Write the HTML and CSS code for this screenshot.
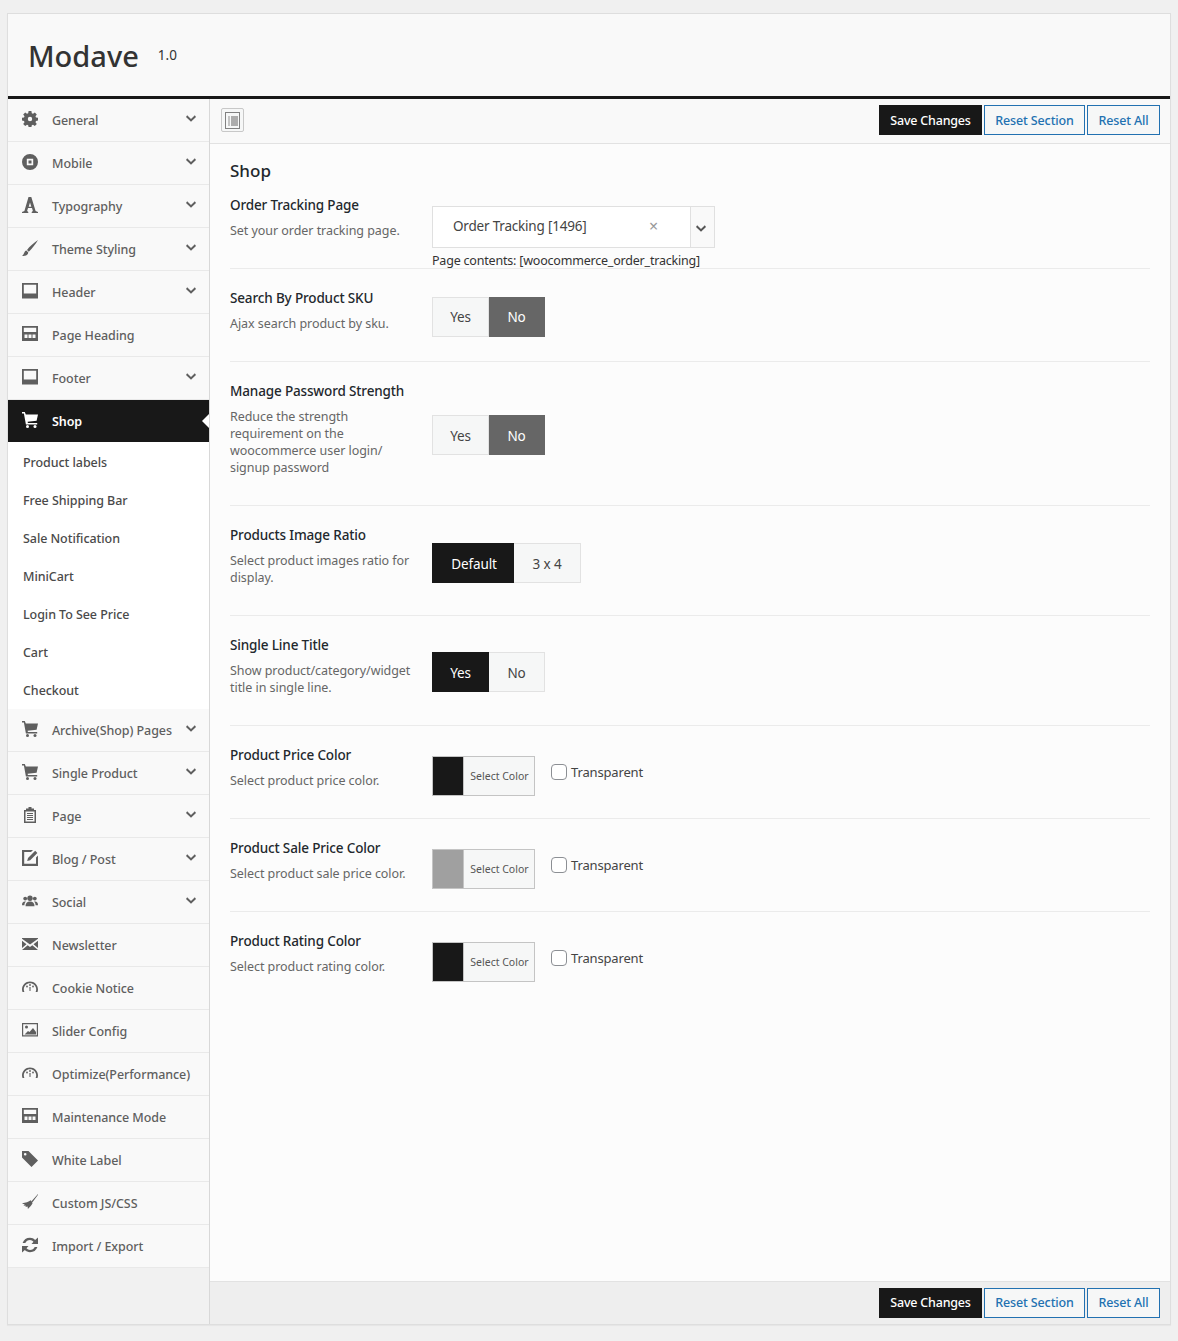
FILE: index.html
```html
<!DOCTYPE html>
<html lang="en">
<head>
<meta charset="utf-8">
<title>Modave Options</title>
<link rel="stylesheet" href="styles.css">
</head>
<body>
<svg class="defs" width="0" height="0" aria-hidden="true">
  <defs>
    <symbol id="i-gear" viewBox="0 0 16 16">
      <path fill-rule="evenodd" d="M6.600 0h2.800l.4 2.200 1.200.5L12.800 1.400l2 2-1.300 1.800.5 1.200 2 .4v2.800l-2 .4-.5 1.200 1.300 1.800-2 2-1.800-1.300-1.200.5-.4 2H6.600l-.4-2-1.200-.5-1.800 1.300-2-2 1.300-1.800-.5-1.200-2-.4V6.800l2-.4.5-1.200L1.200 3.400l2-2L5 2.700l1.200-.5zM8 5.800a2.200 2.200 0 1 0 0 4.400 2.200 2.200 0 0 0 0-4.400z"/>
    </symbol>
    <symbol id="i-mobile" viewBox="0 0 16 16">
      <path fill-rule="evenodd" d="M8 0a8 8 0 1 1 0 16A8 8 0 0 1 8 0zM4.800 4.800v6.400h6.400V4.800zM6.500 6.500h3v3h-3z"/>
    </symbol>
    <symbol id="i-type" viewBox="0 0 16 16">
      <path fill-rule="evenodd" d="M6.500 0h2.800l4.300 14 2.400 1v1h-6.300v-1l1.200-1-.9-3H6l-.9 3 1.200 1v1H0v-1l2.400-1zM8 5.500 6.700 9.800h2.600z"/>
    </symbol>
    <symbol id="i-brush" viewBox="0 0 16 16">
      <path d="M16 0C12 2.500 7.500 6.500 5 10l1.800 1.800C10 9 13.500 4 16 0zM4.400 10.600C2 11.200 2.600 14.200 0 16c3 .2 6.200-.8 6.300-3.500z"/>
    </symbol>
    <symbol id="i-frame" viewBox="0 0 16 16">
      <path fill-rule="evenodd" d="M0 0h16v15.500H0zM1.800 1.800v8.700h12.400V1.800z"/>
    </symbol>
    <symbol id="i-layout" viewBox="0 0 16 16">
      <path fill-rule="evenodd" d="M0 0h16v15H0zM1.800 1.800V6h12.400V1.800zM2.500 8.500v3.500h3V8.500zM6.500 8.500v3.500h3V8.500zM10.500 8.500v3.500h3V8.500z"/>
    </symbol>
    <symbol id="i-cart" viewBox="0 0 16 16">
      <path d="M0 0h2.800l1 2.500H16l-1.400 6.300-9 1 .3 1.200h9.300v1.500H3.900L1.900 1.500H0z"/>
      <circle cx="5.500" cy="14.500" r="1.500"/><circle cx="13" cy="14.500" r="1.500"/>
    </symbol>
    <symbol id="i-clip" viewBox="0 0 16 16">
      <path fill-rule="evenodd" d="M6.500 0h3v1.500H12V3h2v13H2V3h2V1.500h2.500zM3.500 4.500v10h9v-10zM5 6h6v1H5zM5 8h6v1H5zM5 10h6v1H5zM5 12h6v1H5z"/>
    </symbol>
    <symbol id="i-edit" viewBox="0 0 16 16">
      <path d="M0 0h11L9 2H2.200v11.800H14V7.500l2-2V16H0z"/>
      <path d="M13.200.8 15.400 3 8.200 10.200l-3 .8.800-3z"/>
    </symbol>
    <symbol id="i-group" viewBox="0 0 16 16">
      <circle cx="8" cy="5.200" r="2.700"/><circle cx="3.200" cy="5.600" r="1.900"/><circle cx="12.800" cy="5.600" r="1.900"/>
      <path d="M3.500 13.200c0-3 1.500-4.700 4.500-4.700s4.500 1.700 4.500 4.700zM0 12.200c0-2.400.9-3.700 3-3.700.4 0 .8 0 1 .1-1 1-1.500 2.100-1.600 3.600zM16 12.200c0-2.400-.9-3.700-3-3.700-.4 0-.8 0-1 .1 1 1 1.500 2.100 1.600 3.600z"/>
    </symbol>
    <symbol id="i-mail" viewBox="0 0 16 16">
      <path d="M0 2h16v.8L8 8.600 0 2.800zM0 4.800l4.500 3.400L0 12zM16 4.800v7.200l-4.500-3.800zM5.700 9.200 8 10.900l2.300-1.700L16 14H0z"/>
    </symbol>
    <symbol id="i-gauge" viewBox="0 0 16 16">
      <path fill-rule="evenodd" d="M8 2.500c4.400 0 8 3.400 8 7.800 0 1-.2 1.900-.5 2.700h-1.900c.4-.8.600-1.700.6-2.700C14.200 7 11.400 4.300 8 4.300S1.800 7 1.800 10.300c0 1 .2 1.900.6 2.700H.5A8 8 0 0 1 0 10.300c0-4.400 3.600-7.800 8-7.800z"/>
      <circle cx="8" cy="6" r=".9"/><circle cx="5" cy="7.500" r=".9"/><circle cx="11" cy="7.500" r=".9"/><path d="M7.400 8h1.200L8.500 12h-1z"/>
    </symbol>
    <symbol id="i-pic" viewBox="0 0 16 16">
      <path fill-rule="evenodd" d="M0 1h16v13.500H0zM1.200 2.200v11h13.600v-11z"/>
      <circle cx="4.500" cy="5" r="1.500"/><path d="M2.500 12.500 6 9l1.500 1L11 6l3 4v2.500z"/>
    </symbol>
    <symbol id="i-tag" viewBox="0 0 16 16">
      <path fill-rule="evenodd" d="M0 0h6.500L16 9.500 9.500 16 0 6.500zM3.200 2a1.300 1.300 0 1 0 0 2.600 1.300 1.300 0 0 0 0-2.600z"/>
    </symbol>
    <symbol id="i-broom" viewBox="0 0 16 16">
      <path d="M16 0 9.500 7.200l1 1L16 .7zM8.800 6.200c-2.200 1.700-5 2.400-8.800 3 1 .5 1.800.8 2.800 1.100L1.500 11.500l2.500.3-.6 1.300 2.200-.6.300 2.500c2.400-2.400 4.200-4.300 4.700-6z"/>
    </symbol>
    <symbol id="i-sync" viewBox="0 0 16 16">
      <path d="M8 .8c2 0 3.800.8 5.100 2.100L16 .5V7H9.500l2-2.300A5 5 0 0 0 8 3a5.200 5.200 0 0 0-4.700 3H.6A7.900 7.900 0 0 1 8 .8zM0 9h6.500l-2 2.300A5 5 0 0 0 8 13c2.100 0 3.900-1.200 4.700-3h2.700A7.900 7.900 0 0 1 8 15.200c-2 0-3.800-.8-5.100-2.100L0 15.500z"/>
    </symbol>
    <symbol id="i-chev" viewBox="0 0 12 8">
      <path d="M1.400 0 6 4.500 10.600 0 12 2.200 6 8 0 2.200z"/>
    </symbol>
  </defs>
</svg>

<div class="shell">
  <header class="brand">
    <h1 class="brand-name">Modave</h1>
    <span class="brand-ver">1.0</span>
  </header>

  <div class="body">
    <nav class="side">
      <a class="item"><svg class="ico"><use href="#i-gear"/></svg><span class="lbl">General</span><svg class="chev"><use href="#i-chev"/></svg></a>
      <a class="item"><svg class="ico"><use href="#i-mobile"/></svg><span class="lbl">Mobile</span><svg class="chev"><use href="#i-chev"/></svg></a>
      <a class="item"><svg class="ico"><use href="#i-type"/></svg><span class="lbl">Typography</span><svg class="chev"><use href="#i-chev"/></svg></a>
      <a class="item"><svg class="ico"><use href="#i-brush"/></svg><span class="lbl">Theme Styling</span><svg class="chev"><use href="#i-chev"/></svg></a>
      <a class="item"><svg class="ico"><use href="#i-frame"/></svg><span class="lbl">Header</span><svg class="chev"><use href="#i-chev"/></svg></a>
      <a class="item"><svg class="ico"><use href="#i-layout"/></svg><span class="lbl">Page Heading</span></a>
      <a class="item"><svg class="ico"><use href="#i-frame"/></svg><span class="lbl">Footer</span><svg class="chev"><use href="#i-chev"/></svg></a>
      <a class="item item-on"><svg class="ico"><use href="#i-cart"/></svg><span class="lbl">Shop</span></a>
      <div class="sub">
        <a class="sub-item">Product labels</a>
        <a class="sub-item">Free Shipping Bar</a>
        <a class="sub-item">Sale Notification</a>
        <a class="sub-item">MiniCart</a>
        <a class="sub-item">Login To See Price</a>
        <a class="sub-item">Cart</a>
        <a class="sub-item">Checkout</a>
      </div>
      <a class="item"><svg class="ico"><use href="#i-cart"/></svg><span class="lbl">Archive(Shop) Pages</span><svg class="chev"><use href="#i-chev"/></svg></a>
      <a class="item"><svg class="ico"><use href="#i-cart"/></svg><span class="lbl">Single Product</span><svg class="chev"><use href="#i-chev"/></svg></a>
      <a class="item"><svg class="ico"><use href="#i-clip"/></svg><span class="lbl">Page</span><svg class="chev"><use href="#i-chev"/></svg></a>
      <a class="item"><svg class="ico"><use href="#i-edit"/></svg><span class="lbl">Blog / Post</span><svg class="chev"><use href="#i-chev"/></svg></a>
      <a class="item"><svg class="ico"><use href="#i-group"/></svg><span class="lbl">Social</span><svg class="chev"><use href="#i-chev"/></svg></a>
      <a class="item"><svg class="ico"><use href="#i-mail"/></svg><span class="lbl">Newsletter</span></a>
      <a class="item"><svg class="ico"><use href="#i-gauge"/></svg><span class="lbl">Cookie Notice</span></a>
      <a class="item"><svg class="ico"><use href="#i-pic"/></svg><span class="lbl">Slider Config</span></a>
      <a class="item"><svg class="ico"><use href="#i-gauge"/></svg><span class="lbl">Optimize(Performance)</span></a>
      <a class="item"><svg class="ico"><use href="#i-layout"/></svg><span class="lbl">Maintenance Mode</span></a>
      <a class="item"><svg class="ico"><use href="#i-tag"/></svg><span class="lbl">White Label</span></a>
      <a class="item"><svg class="ico"><use href="#i-broom"/></svg><span class="lbl">Custom JS/CSS</span></a>
      <a class="item"><svg class="ico"><use href="#i-sync"/></svg><span class="lbl">Import / Export</span></a>
    </nav>

    <main class="main">
      <div class="bar bar-top">
        <span class="expand">
          <svg class="expand-ico" viewBox="0 0 15 17">
            <rect x=".5" y=".5" width="14" height="16" fill="#f6f7f7" stroke="#808080"/>
            <rect x="3" y="4" width="2" height="10" fill="#c4c4c4"/>
            <rect x="6" y="4" width="7" height="10" fill="#acacac"/>
          </svg>
        </span>
        <div class="actions">
          <button class="btn btn-save">Save Changes</button>
          <button class="btn btn-reset">Reset Section</button>
          <button class="btn btn-reset">Reset All</button>
        </div>
      </div>

      <section class="content">
        <h2 class="title">Shop</h2>

        <div class="row row-first">
          <div class="info">
            <h3 class="name">Order Tracking Page</h3>
            <p class="desc">Set your order tracking page.</p>
          </div>
          <div class="ctl ctl-select">
            <div class="select">
              <span class="select-val">Order Tracking [1496]</span>
              <span class="select-x">×</span>
              <span class="select-arrow"><svg class="select-chev"><use href="#i-chev"/></svg></span>
            </div>
            <div class="note">Page contents: [woocommerce_order_tracking]</div>
          </div>
        </div>

        <div class="row">
          <div class="info">
            <h3 class="name">Search By Product SKU</h3>
            <p class="desc">Ajax search product by sku.</p>
          </div>
          <div class="ctl">
            <div class="seg"><span class="opt opt-yn">Yes</span><span class="opt opt-yn opt-gray">No</span></div>
          </div>
        </div>

        <div class="row row-tall">
          <div class="info">
            <h3 class="name">Manage Password Strength</h3>
            <p class="desc">Reduce the strength requirement on the woocommerce user login/ signup password</p>
          </div>
          <div class="ctl ctl-up">
            <div class="seg"><span class="opt opt-yn">Yes</span><span class="opt opt-yn opt-gray">No</span></div>
          </div>
        </div>

        <div class="row row-mid">
          <div class="info">
            <h3 class="name">Products Image Ratio</h3>
            <p class="desc">Select product images ratio for display.</p>
          </div>
          <div class="ctl">
            <div class="seg"><span class="opt opt-def opt-dark">Default</span><span class="opt opt-ratio">3 x 4</span></div>
          </div>
        </div>

        <div class="row row-mid">
          <div class="info">
            <h3 class="name">Single Line Title</h3>
            <p class="desc">Show product/category/widget title in single line.</p>
          </div>
          <div class="ctl ctl-up">
            <div class="seg"><span class="opt opt-yn opt-dark">Yes</span><span class="opt opt-yn">No</span></div>
          </div>
        </div>

        <div class="row">
          <div class="info">
            <h3 class="name">Product Price Color</h3>
            <p class="desc">Select product price color.</p>
          </div>
          <div class="ctl ctl-color">
            <div class="color"><span class="swatch swatch-dark"></span><span class="color-btn">Select Color</span></div>
            <label class="tr"><input class="check" type="checkbox">Transparent</label>
          </div>
        </div>

        <div class="row">
          <div class="info">
            <h3 class="name">Product Sale Price Color</h3>
            <p class="desc">Select product sale price color.</p>
          </div>
          <div class="ctl ctl-color">
            <div class="color"><span class="swatch swatch-gray"></span><span class="color-btn">Select Color</span></div>
            <label class="tr"><input class="check" type="checkbox">Transparent</label>
          </div>
        </div>

        <div class="row row-last">
          <div class="info">
            <h3 class="name">Product Rating Color</h3>
            <p class="desc">Select product rating color.</p>
          </div>
          <div class="ctl ctl-color">
            <div class="color"><span class="swatch swatch-dark"></span><span class="color-btn">Select Color</span></div>
            <label class="tr"><input class="check" type="checkbox">Transparent</label>
          </div>
        </div>
      </section>

      <div class="bar bar-bottom">
        <div class="actions">
          <button class="btn btn-save">Save Changes</button>
          <button class="btn btn-reset">Reset Section</button>
          <button class="btn btn-reset">Reset All</button>
        </div>
      </div>
    </main>
  </div>
</div>
</body>
</html>
```

FILE: styles.css
```css
* { box-sizing: border-box; }
html, body { margin: 0; padding: 0; }
body {
  background: #f0f0f0;
  font-family: "Noto Sans", "Open Sans", sans-serif;
  font-size: 12.5px;
  color: #444;
  padding: 13px 7px 15px;
}
.defs { position: absolute; }

.shell {
  height: 1312px;
  border: 1px solid #dedede;
  background: #fcfcfc;
  display: flex;
  flex-direction: column;
  box-shadow: 0 1px 1px rgba(0,0,0,.04);
}

/* brand */
.brand {
  height: 82px;
  background: #f9f9f9;
  display: flex;
  align-items: flex-start;
  padding: 22px 0 0 20px;
  flex: none;
}
.brand-name {
  margin: 0;
  font-size: 29px;
  line-height: 40px;
  font-weight: 500;
  color: #333;
}
.brand-ver {
  margin: 10px 0 0 19px;
  font-size: 13.5px;
  line-height: 19px;
  color: #333;
}

.body {
  flex: 1;
  min-height: 0;
  display: flex;
  border-top: 3px solid #181818;
}

/* sidebar */
.side {
  width: 202px;
  flex: none;
  background: #f1f1f1;
  border-right: 1px solid #d8d8d8;
  display: flex;
  flex-direction: column;
}
.item {
  height: 43px;
  flex: none;
  display: flex;
  align-items: center;
  padding-left: 14px;
  background: #f9f9f9;
  border-bottom: 1px solid #e9e9e9;
  color: #5f5f5f;
  position: relative;
}
.ico {
  width: 16px;
  height: 16px;
  fill: currentColor;
  flex: none;
  margin-top: -3px;
}
.lbl {
  margin-left: 14px;
  font-weight: 500;
  white-space: nowrap;
  letter-spacing: -0.07px;
}
.chev {
  position: absolute;
  right: 13px;
  top: 16px;
  width: 10px;
  height: 7px;
  fill: #5f5f5f;
}
.item-on {
  background: #181818;
  color: #fff;
  border-bottom: 1px solid #fff;
}
.item-on .lbl { font-weight: 600; }
.item-on::after {
  content: "";
  position: absolute;
  right: 0;
  top: 14px;
  border-style: solid;
  border-width: 7px 7px 7px 0;
  border-color: transparent #fff transparent transparent;
}
.sub {
  background: #fff;
}
.sub-item {
  display: flex;
  align-items: center;
  height: 38px;
  padding-left: 15px;
  color: #4a4a4a;
  font-weight: 500;
  letter-spacing: -0.07px;
}

/* main */
.main {
  flex: 1;
  min-width: 0;
  display: flex;
  flex-direction: column;
}
.bar {
  flex: none;
  display: flex;
  align-items: center;
  justify-content: space-between;
}
.bar-top {
  height: 45px;
  background: #f9f9f9;
  border-bottom: 1px solid #e2e2e2;
  padding: 0 10px 2px 11px;
}
.bar-bottom {
  height: 43px;
  background: #eeeeee;
  border-top: 1px solid #e2e2e2;
  justify-content: flex-end;
  padding: 0 10px 1px 11px;
}
.expand {
  width: 23px;
  height: 24px;
  border: 1px solid #c8c8c8;
  border-radius: 2px;
  background: #f6f7f7;
  display: flex;
  align-items: center;
  justify-content: center;
}
.expand-ico {
  width: 15px;
  height: 17px;
}
.actions {
  display: flex;
  gap: 2px;
}
.btn {
  height: 30px;
  font: 500 12.5px/26px "Noto Sans", "Open Sans", sans-serif;
  letter-spacing: -0.12px;
  padding: 1px 0 0;
  border: 1px solid #2271b1;
  background: #f6f7f7;
  color: #2271b1;
  border-radius: 0;
}
.btn:nth-child(1) { width: 103px; }
.btn:nth-child(2) { width: 101px; }
.btn:nth-child(3) { width: 73px; }
.btn-save {
  background: #181818;
  border-color: #181818;
  color: #fff;
  letter-spacing: -0.2px;
}

.content {
  flex: 1;
  min-height: 0;
  padding: 0 20px;
}
.title {
  margin: 0;
  padding-top: 15px;
  height: 37px;
  font-size: 17px;
  line-height: 24px;
  font-weight: 500;
  color: #23282d;
}

.row {
  display: flex;
  align-items: center;
  height: 93px;
  border-bottom: 1px solid #ebebeb;
}
.row-tall { height: 144px; }
.row-mid { height: 110px; }
.row-first { height: 88px; }
.row-last { border-bottom: 0; }

.info {
  width: 202px;
  flex: none;
  align-self: flex-start;
  padding-top: 20px;
  padding-right: 12px;
}
.row-first .info { padding-top: 15px; }
.name {
  margin: 0;
  font-size: 13.5px;
  line-height: 19px;
  font-weight: 500;
  letter-spacing: -0.15px;
  color: #23282d;
}
.desc {
  margin: 7px 0 0;
  font-size: 12.5px;
  line-height: 17px;
  letter-spacing: -0.05px;
  color: #666;
}
.ctl { padding-top: 4px; }
.ctl-up { padding-top: 3px; }
.ctl-select {
  align-self: flex-start;
  padding-top: 25px;
}
.ctl-color {
  align-self: flex-start;
  padding-top: 30px;
  display: flex;
  align-items: flex-start;
}

.select {
  width: 283px;
  height: 42px;
  background: #fff;
  border: 1px solid #e0e0e0;
  display: flex;
  align-items: center;
  padding-left: 20px;
  font-size: 13.5px;
  letter-spacing: -0.2px;
  color: #444;
}
.select-val { flex: 1; padding-bottom: 3px; }
.select-x {
  color: #999;
  font-size: 16px;
  margin-right: 32px;
  padding-bottom: 3px;
}
.select-arrow {
  width: 24px;
  height: 40px;
  background: #f9f9f9;
  border-left: 1px solid #e0e0e0;
  display: flex;
  align-items: center;
  justify-content: center;
  padding: 2px 3px 0 0;
}
.select-chev { width: 10px; height: 7px; fill: #555; }
.note {
  margin: 4px 0 0;
  font-size: 12.5px;
  line-height: 17px;
  letter-spacing: -0.2px;
  color: #333;
  white-space: nowrap;
  height: 17px;
}

.seg { display: flex; }
.opt {
  height: 40px;
  display: flex;
  align-items: center;
  justify-content: center;
  font-size: 13.5px;
  letter-spacing: -0.1px;
  color: #444;
  background: #f6f7f7;
  border: 1px solid #e2e2e2;
}
.ctl-up .opt, .row-mid .opt { padding-top: 2px; }
.opt-yn { width: 57px; }
.opt-yn + .opt-yn { width: 56px; border-left: 0; }
.opt-gray { background: #666; border-color: #666; color: #fff; }
.opt-dark { background: #181818; border-color: #181818; color: #fff; }
.opt-def { width: 82px; padding-left: 2px; }
.opt-ratio { width: 67px; border-left: 0; }

.color {
  width: 103px;
  height: 40px;
  display: flex;
  border: 1px solid #c4c4c4;
  background: #f6f7f7;
}
.swatch { width: 31px; border-right: 1px solid #c4c4c4; }
.swatch-dark { background: #181818; }
.swatch-gray { background: #a0a0a0; }
.color-btn {
  flex: 1;
  display: flex;
  align-items: center;
  justify-content: center;
  font-size: 10.5px;
  color: #555;
  padding: 0 0 1px 1px;
}
.tr {
  display: flex;
  align-items: center;
  margin: 6px 0 0 16px;
  font-size: 13px;
  line-height: 20px;
  letter-spacing: -0.15px;
  color: #444;
}
.check {
  appearance: none;
  -webkit-appearance: none;
  width: 16px;
  height: 16px;
  margin: 0 4px 0 0;
  background: #fff;
  border: 1px solid #8c8f94;
  border-radius: 4px;
}
```
